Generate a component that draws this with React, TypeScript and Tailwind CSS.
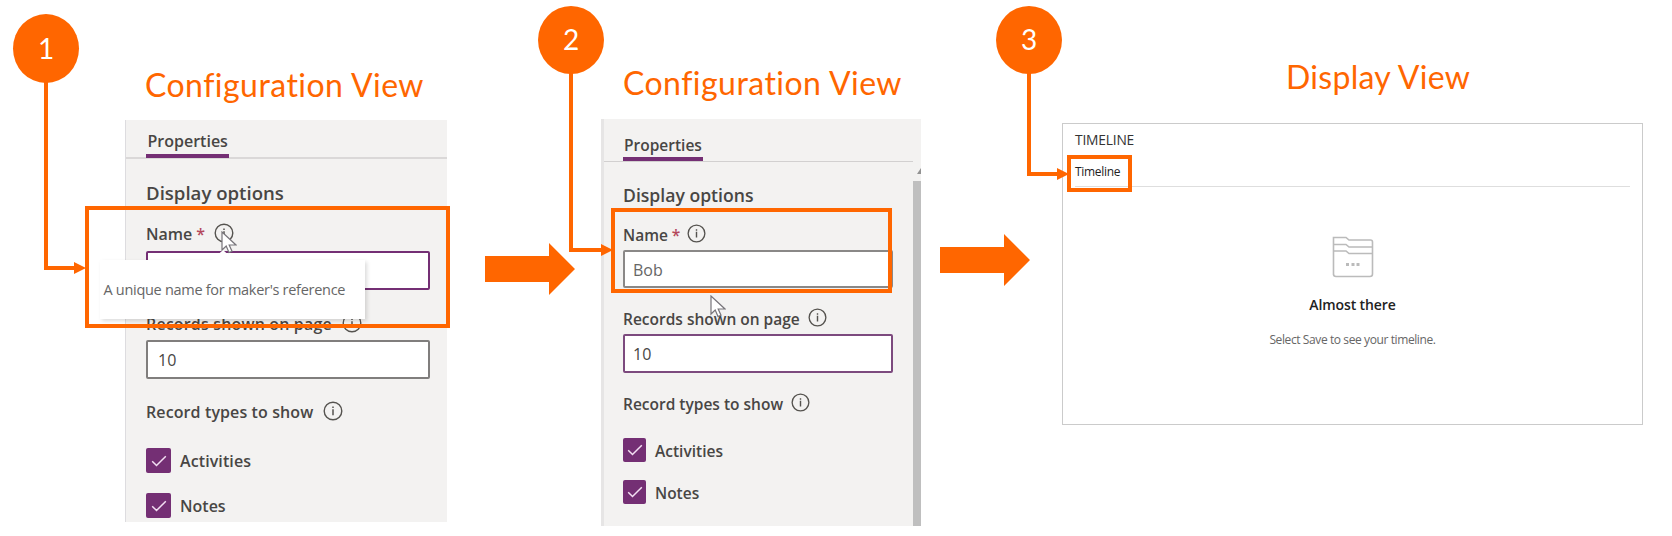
import React from "react";

const segoe = "font-['Open_Sans','Noto_Sans',sans-serif]";

function InfoIcon({ className = "" }: { className?: string }) {
  return (
    <svg viewBox="0 0 20 20" fill="none" stroke="#55534f" className={`mb-[3px] shrink-0 ${className}`}>
      <circle cx="10" cy="10" r="8.8" strokeWidth="1.4" />
      <path d="M10 8.2v6M10 5.4v1.6" strokeWidth="1.5" />
    </svg>
  );
}

function Cursor({ className = "" }: { className?: string }) {
  return (
    <svg viewBox="0 0 16 24" className={className}>
      <path d="M1 1v18l4.2-4 2.8 6.5 3-1.3-2.8-6.2H15z" fill="#fff" stroke="#77747a" strokeWidth="1.2" />
    </svg>
  );
}

function Check({ className = "" }: { className?: string }) {
  return (
    <span className={`flex shrink-0 items-center justify-center rounded-[2px] bg-[#742f74] ${className}`}>
      <svg viewBox="0 0 16 12" className="h-3 w-4" fill="none" stroke="#f3dff3" strokeWidth="1.5">
        <path d="M1.2 6.2l4.3 4.3L14.8 1.2" />
      </svg>
    </span>
  );
}

function BlockArrow({ className = "" }: { className?: string }) {
  return (
    <svg viewBox="0 0 90 52" className={`h-[52px] w-[90px] shrink-0 ${className}`}>
      <path d="M0 13h64V0l26 26L64 52V39H0z" fill="#ff6600" />
    </svg>
  );
}

function Title({ children, className = "" }: { children: React.ReactNode; className?: string }) {
  return (
    <h2 className={`whitespace-nowrap font-['Lato','Open_Sans',sans-serif] text-[32px] leading-[40px] text-[#ff6600] ${className}`}>
      {children}
    </h2>
  );
}

function Badge({ n, className = "" }: { n: number; className?: string }) {
  return (
    <div
      className={`absolute flex w-[66px] items-center justify-center rounded-[50%] bg-[#ff6600] pb-0.5 font-['Lato',sans-serif] text-[28px] leading-none text-white ${className}`}
    >
      {n}
    </div>
  );
}

export default function App() {
  return (
    <main className={`relative flex h-[536px] w-[1672px] items-start overflow-hidden bg-white text-[#484644] ${segoe}`}>
      <section className="ml-[125px] w-[322px] shrink-0 pt-[65px]">
        <Title className="ml-5 tracking-[0.46px]">Configuration View</Title>
        <div className="mt-[15px] h-[402px] border-l border-[#dddcdf] bg-[#f3f2f1]">
          <div className="flex h-[39px] border-b-2 border-[#dad8d8] pl-5">
            <div className="h-[38px] border-b-4 border-[#742f74] px-[1.5px] pt-2 text-[16px] font-semibold leading-[26px]">Properties</div>
          </div>
          <div className="flex flex-col pl-5 pr-[17px]">
            <h3 className="mb-px mt-5 h-7 text-[18.6px] font-semibold leading-7">Display options</h3>
            <div className="mt-[14px] flex h-6 items-center text-[16px] font-semibold leading-6">
              Name<span className="ml-1 text-[#b4485c]">*</span>
              <InfoIcon className="ml-[9px] h-5 w-5" />
            </div>
            <div className="mt-[5px] h-[39px] rounded-[2px] border-2 border-[#742f74] bg-white" />
            <div className="mt-[22px] flex h-6 items-center text-[16px] font-semibold leading-6 tracking-[0.16px]">
              Records shown on page
              <InfoIcon className="ml-[10px] h-5 w-5" />
            </div>
            <div className="mt-[4px] h-[39px] rounded-[2px] border-2 border-[#807e7d] bg-white pl-[10px] text-[16px] leading-[37px]">10</div>
            <div className="mt-[21px] flex h-6 items-center text-[16px] font-semibold leading-6 tracking-[0.11px]">
              Record types to show
              <InfoIcon className="ml-[10px] h-5 w-5" />
            </div>
            <div className="mt-[24px] flex h-[25px] items-center gap-[9px] text-[16px] font-semibold tracking-[0.1px]">
              <Check className="h-[25px] w-[25px]" /><span className="pt-px">Activities</span>
            </div>
            <div className="mt-[20px] flex h-[25px] items-center gap-[9px] text-[16px] font-semibold">
              <Check className="h-[25px] w-[25px]" />Notes
            </div>
          </div>
        </div>
      </section>

      <BlockArrow className="ml-[38px] mt-[243px]" />

      <section className="ml-[26px] w-[320px] shrink-0 pt-[63px]">
        <Title className="ml-[22px] tracking-[0.46px]">Configuration View</Title>
        <div className="mt-4 flex h-[407px] bg-[#f3f2f1]">
          <div className="w-[312px] border-l-[3px] border-[#e6e5e5]">
            <div className="flex h-[43px] border-b border-[#d2d0d0] pl-[19px]">
              <div className="h-[42px] border-b-4 border-[#742f74] px-[1px] pt-[13px] text-[15.5px] font-semibold leading-[26px]">Properties</div>
            </div>
            <div className="flex flex-col pl-[19px] pr-[20.5px]">
              <h3 className="mt-[19px] h-7 text-[17.6px] font-semibold leading-7">Display options</h3>
              <div className="mt-[14px] flex h-6 items-center text-[15.5px] font-semibold leading-6">
                Name<span className="ml-1 text-[#b4485c]">*</span>
                <InfoIcon className="ml-[7px] h-[19px] w-[19px]" />
              </div>
              <div className="mt-[3px] h-[38px] rounded-[2px] border-2 border-[#8a8887] bg-white pl-2 text-[16px] leading-[37px] text-[#666]">Bob</div>
              <div className="mt-[19px] flex h-6 items-center text-[15.5px] font-semibold leading-6">
                Records shown on page
                <InfoIcon className="ml-2 h-[19px] w-[19px]" />
              </div>
              <div className="mt-[3px] h-[39px] rounded-[2px] border-2 border-[#7c4a7e] bg-white pl-2 text-[16px] leading-[37px]">10</div>
              <div className="mt-[19px] flex h-6 items-center text-[15.5px] font-semibold leading-6">
                Record types to show
                <InfoIcon className="ml-2 h-[19px] w-[19px]" />
              </div>
              <div className="mt-[22px] flex h-[24px] items-center gap-[9px] text-[15.5px] font-semibold">
                <Check className="h-[24px] w-[23px]" /><span className="pt-[3px]">Activities</span>
              </div>
              <div className="mt-[18px] flex h-[24px] items-center gap-[9px] text-[15.5px] font-semibold">
                <Check className="h-[24px] w-[23px]" /><span className="pt-[3px]">Notes</span>
              </div>
            </div>
          </div>
          <div className="flex w-2 flex-col pt-[49px]">
            <svg viewBox="0 0 8 6" className="ml-1 h-[6px] w-1" preserveAspectRatio="xMinYMin slice"><path d="M0 6L4 0v6z" fill="#929292" /></svg>
            <div className="mt-[7px] flex-1 bg-[#bfbfbf]" />
          </div>
        </div>
      </section>

      <BlockArrow className="ml-[19px] mt-[234px]" />

      <section className="ml-[32px] w-[581px] shrink-0 pt-[57px]">
        <Title className="pl-[224px] tracking-[0.3px]">Display View</Title>
        <div className="mt-[26px] flex h-[302px] flex-col border border-[#cbcbcb] px-3">
          <div className="h-[30px] pt-[3px] text-[13.8px] leading-[26px] tracking-[-0.2px] text-[#333]">TIMELINE</div>
          <div className="h-[33px] border-b border-[#dedede] pt-2 text-[12px] leading-5 tracking-[-0.3px] text-[#222]">Timeline</div>
          <div className="flex flex-col items-center">
            <svg viewBox="0 0 42 42" className="mt-[49px] h-[42px] w-[42px]" fill="none" stroke="#bbb" strokeWidth="1.6">
              <path d="M1.5 39V1.5H14l3 2.5h21.5q2 0 2 2V38q0 2.5-2.5 2.5H4q-2.5 0-2.5-2.5z" />
              <path d="M1.5 8.500H14l3 2.500h23.500M1.500 15H14l3 2.500h23.500" />
              <path d="M14 28.500h3M19.500 28.500h3M24.500 28.500h3" strokeWidth="3" />
            </svg>
            <div className="mt-[15px] text-[14px] font-semibold leading-6 tracking-[-0.1px] text-[#222]">Almost there</div>
            <div className="mt-[13px] text-[12px] leading-5 tracking-[-0.4px] text-[#666]">Select Save to see your timeline.</div>
          </div>
        </div>
      </section>

      <div className="absolute left-[100px] top-[260px] flex h-[59px] w-[265px] items-center whitespace-nowrap bg-white pl-[3.5px] pt-px text-[14.5px] tracking-[-0.29px] text-[#666] shadow-[2px_2px_4px_rgba(0,0,0,0.14)]">
        A unique name for maker's reference
      </div>
      <svg viewBox="0 0 26 12" className="absolute left-[210px] top-[250px] h-[12px] w-[26px]"><path d="M0 12L13 0l13 12z" fill="#fff" /></svg>
      <Cursor className="absolute left-[221px] top-[231px] h-[24px] w-[16px]" />
      <Cursor className="absolute left-[710px] top-[295px] h-[24px] w-[16px]" />

      <div className="absolute left-[85px] top-[206px] h-[122px] w-[365px] border-4 border-[#ff6600]" />
      <div className="absolute left-[611px] top-[208px] h-[85px] w-[281px] border-4 border-[#ff6600]" />
      <div className="absolute left-[1067px] top-[155px] h-[37px] w-[65px] border-4 border-[#ff6600]" />

      <svg viewBox="0 0 1672 536" className="absolute left-0 top-0 h-[536px] w-[1672px]" fill="none" stroke="#ff6600" strokeWidth="4">
        <path d="M46 60V268H76M571 60V250H602M1029 60V174H1058" />
        <path d="M74 262l12 6-12 6zM601 244l12 6-12 6zM1057 168l12 6-12 6z" fill="#ff6600" stroke="none" />
      </svg>
      <Badge n={1} className="left-[13px] top-[14px] h-[69px]" />
      <Badge n={2} className="left-[538px] top-[6px] h-[68px]" />
      <Badge n={3} className="left-[996px] top-[6px] h-[68px]" />
    </main>
  );
}
